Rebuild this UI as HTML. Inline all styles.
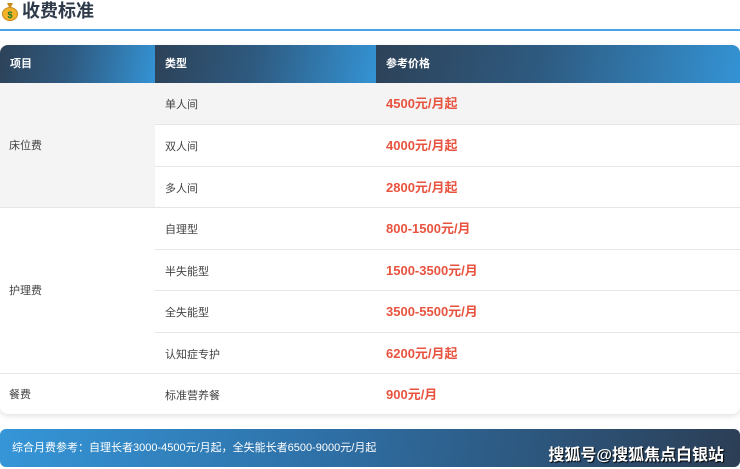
<!DOCTYPE html>
<html><head><meta charset="utf-8"><style>
*{margin:0;padding:0;box-sizing:border-box}
body{width:740px;height:469px;background:#fff;font-family:"Liberation Sans","Noto Sans CJK SC",sans-serif;position:relative;overflow:hidden}
.abs{position:absolute}
.title{left:22px;top:0px;font-size:18px;font-weight:bold;color:#2e3a4a;line-height:22px}
.line{left:0;top:29px;width:740px;height:2px;background:#4ba3e6}
.tbl{left:0;top:45px;width:740px;height:369px;border-radius:8px;overflow:hidden;box-shadow:0 2px 6px rgba(0,0,0,.12);background:#fff}
.h{position:absolute;top:0;height:38px;background:linear-gradient(100deg,#2d4258 0%,#2e5a80 45%,#3493d4 100%);color:#fff;font-size:11px;font-weight:bold;line-height:38px;padding-left:10px}
.c{position:absolute;font-size:11px;color:#444;display:flex;align-items:center}
.p{position:absolute;left:376px;width:364px;font-size:13px;font-weight:bold;color:#e8533f;padding-left:10px;display:flex;align-items:center}
.hr{position:absolute;height:1px;background:#e6e6e6}
.foot{left:0;top:429px;width:740px;height:38px;border-radius:6px;background:linear-gradient(100deg,#3596d8 0%,#2e6fa5 45%,#2c3e55 100%);color:#fff;font-size:11px;line-height:38px;padding-left:12px}
.wm{right:16px;top:441px;color:#fff;font-size:16px;font-weight:bold;text-shadow:1px 1px 1px #000}
</style></head><body>
<svg class="abs" style="left:1px;top:1px" width="18" height="20" viewBox="0 0 18 20"><path d="M6 2 L12 2 L10 6 L8 6Z" fill="#c98a1a"/><ellipse cx="9" cy="13" rx="7.5" ry="6.5" fill="#f2b32a" stroke="#c98a1a"/><text x="9" y="17" font-size="9" font-weight="bold" fill="#1a7a2a" text-anchor="middle" font-family="Liberation Sans">$</text></svg>
<div class="abs title">收费标准</div>
<div class="abs line"></div>
<div class="abs tbl">
<div class="h" style="left:0;width:155px">项目</div>
<div class="h" style="left:155px;width:221px">类型</div>
<div class="h" style="left:376px;width:364px">参考价格</div>
<div style="position:absolute;left:0;top:38px;width:740px;height:41px;background:#f4f4f4"></div>
<div style="position:absolute;left:0;top:38px;width:155px;height:124px;background:#f4f4f4"></div>
<div class="c" style="left:9px;top:38px;height:124px">床位费</div>
<div class="c" style="left:9px;top:162px;height:166px">护理费</div>
<div class="c" style="left:9px;top:328px;height:41px">餐费</div>
<div class="hr" style="left:155px;width:585px;top:79px"></div>
<div class="hr" style="left:155px;width:585px;top:121px"></div>
<div class="hr" style="left:0;width:740px;top:162px"></div>
<div class="hr" style="left:155px;width:585px;top:204px"></div>
<div class="hr" style="left:155px;width:585px;top:245px"></div>
<div class="hr" style="left:155px;width:585px;top:287px"></div>
<div class="hr" style="left:0;width:740px;top:328px"></div>
<div class="c" style="left:165px;top:38px;height:41px">单人间</div>
<div class="c" style="left:165px;top:80px;height:41px">双人间</div>
<div class="c" style="left:165px;top:122px;height:41px">多人间</div>
<div class="c" style="left:165px;top:163px;height:41px">自理型</div>
<div class="c" style="left:165px;top:205px;height:41px">半失能型</div>
<div class="c" style="left:165px;top:246px;height:41px">全失能型</div>
<div class="c" style="left:165px;top:288px;height:41px">认知症专护</div>
<div class="c" style="left:165px;top:329px;height:41px">标准营养餐</div>
<div class="p" style="top:37px;height:41px">4500元/月起</div>
<div class="p" style="top:79px;height:41px">4000元/月起</div>
<div class="p" style="top:121px;height:41px">2800元/月起</div>
<div class="p" style="top:162px;height:41px">800-1500元/月</div>
<div class="p" style="top:204px;height:41px">1500-3500元/月</div>
<div class="p" style="top:245px;height:41px">3500-5500元/月</div>
<div class="p" style="top:287px;height:41px">6200元/月起</div>
<div class="p" style="top:328px;height:41px">900元/月</div>
</div>
<div class="abs foot">综合月费参考：自理长者3000-4500元/月起，全失能长者6500-9000元/月起</div>
<div class="abs wm">搜狐号@搜狐焦点白银站</div>
</body></html>
